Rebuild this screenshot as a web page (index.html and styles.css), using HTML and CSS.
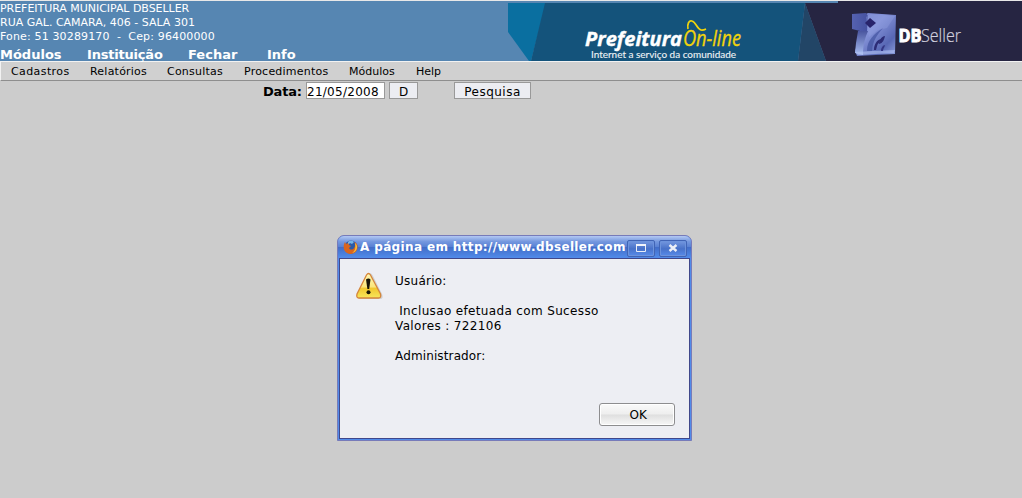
FILE: index.html
```html
<!DOCTYPE html>
<html lang="pt-BR">
<head>
<meta charset="utf-8">
<title>Prefeitura On-line</title>
<link rel="stylesheet" href="styles.css">
</head>
<body>
<header class="header">
  <div class="header-left">
    <div class="address">
      <div class="addr1">PREFEITURA MUNICIPAL DBSELLER</div>
      <div class="addr2">RUA GAL. CAMARA, 406 - SALA 301</div>
      <div class="addr3">Fone: 51 30289170&nbsp; -&nbsp; Cep: 96400000</div>
    </div>
    <nav class="main-nav"><span>Módulos</span><span class="inst">Instituição</span><span>Fechar</span><span>Info</span></nav>
  </div>
  <svg class="banner" width="514" height="60" viewBox="508 1 514 60">
    <defs>
      <linearGradient id="cube" x1="0" y1="0" x2="1" y2="1"><stop offset="0" stop-color="#6f7dca"/><stop offset=".4" stop-color="#8492d8"/><stop offset=".75" stop-color="#5767b4"/><stop offset="1" stop-color="#8fa2df"/></linearGradient>
      <linearGradient id="cubeLeg" x1="0" y1="0" x2="0" y2="1"><stop offset="0" stop-color="#4a569f"/><stop offset="1" stop-color="#a8bdf2"/></linearGradient>
      <linearGradient id="cubeTop" x1="0" y1="0" x2="1" y2="0"><stop offset="0" stop-color="#5562b0"/><stop offset="1" stop-color="#4551a0"/></linearGradient>
    </defs>
    <rect x="508" y="1" width="330" height="2" fill="#5686b2"/>
    <path d="M508 3h38l-15 58h-2L508 32z" fill="#0a6fa0"/>
    <path d="M545 3h260l-7 58H531z" fill="#14537b"/>
    <path d="M805 3l-7 58h28z" fill="#224566"/>
    <path d="M805 3h33V1h184v60H826z" fill="#262542"/>
    <text class="brand" x="585" y="46" textLength="97" lengthAdjust="spacingAndGlyphs">Prefeitura</text>
    <text class="online" x="683" y="46" textLength="58" lengthAdjust="spacingAndGlyphs">On-line</text>
    <path d="M688 29c-1-5 1-9 4-8 4 1 5 8 9 9 2 .5 4-.5 5-1" fill="none" stroke="#f2d40b" stroke-width="1.7"/>
    <text class="slogan" x="591" y="57.5" textLength="145" lengthAdjust="spacingAndGlyphs">Internet a serviço da comunidade</text>
    <g class="cube">
      <path d="M864 15l4-2 28 2-1 39-38 2-2-5 6-18z" fill="url(#cube)"/>
      <path d="M852 14l14-1 2 3-1 15h-7l-8-2z" fill="url(#cubeTop)"/>
      <path d="M858 31h10c-3 7-5 14-5 24l-8-2 1-10z" fill="url(#cubeLeg)"/>
      <path d="M866 17l4-3 25 2-8 12-9 2-9 7z" fill="#94a3e2" opacity=".35"/>
      <path d="M855 52l18-1 22-1-1 3-36 2z" fill="#b3c3f3" opacity=".6"/>
      <path d="M870 18l6 5-6 5-5-5z" fill="#28246b"/>
      <path d="M867 51c0-11 7-17 16-23-6 7-10 12-11 23z" fill="#4253a0" opacity=".7"/>
      <path d="M874 50c0-6 3-10 7-11l-2 4c-2 1-2 4-3 7z" fill="#2c2c76"/>
      <path d="M879 44c0-4 3-8 6-8-1 4-2 7-6 8z" fill="#2c2c76"/>
      <path d="M881 51c0-3 2-6 4-6 0 2-2 3-2 6z" fill="#343785"/>
    </g>
    <text class="db" x="898.5" y="42" textLength="23" lengthAdjust="spacingAndGlyphs">DB</text>
    <text class="seller" x="921" y="42" textLength="40" lengthAdjust="spacingAndGlyphs">Seller</text>
  </svg>
</header>
<nav class="sub-nav"><span class="s1">Cadastros</span><span class="s2">Relatórios</span><span class="s2">Consultas</span><span class="s2">Procedimentos</span><span>Módulos</span><span>Help</span></nav>
<main class="search">
  <label class="date-label" for="data">Data:</label>
  <input class="date-input" id="data" value="21/05/2008">
  <button class="pick">D</button>
  <button class="query">Pesquisa</button>
</main>
<section class="dialog">
  <div class="title-bar">
    <svg class="fox" width="16" height="16" viewBox="0 0 16 16">
      <circle cx="8" cy="8" r="6.5" fill="#2a5aa8"/><path d="M5 3c2-2 5-1 6 0L9 5 7 4 5 6z" fill="#74b4e8"/>
      <path d="M2 3l1 2 2-1 1 2 2 1-2 2c1 2 4 2 5 0 2-2 1-5 0-6 4 1 4 5 3 8-2 4-7 5-10 3C0 12 0 6 2 3z" fill="#d9641e"/>
      <path d="M12 4c4 3 2 9-3 10 3-2 4-5 3-10z" fill="#f5bd3c"/>
    </svg>
    <span class="title">A página em http://www.dbseller.com</span>
    <span class="win-button"><svg width="12" height="10" viewBox="0 0 12 10"><path d="M1.5 1.5h9v7h-9z" fill="none" stroke="#e9edf6"/><path d="M1 1h10v2H1z" fill="#f2f4fa"/></svg></span>
    <span class="win-button close"><svg width="12" height="10" viewBox="0 0 12 10"><path d="M2.5 2L9.5 8M9.5 2L2.5 8" stroke="#edf0f7" stroke-width="2.4"/></svg></span>
  </div>
  <div class="dialog-body">
    <svg class="warning" width="30" height="30" viewBox="0 0 30 30">
      <defs><linearGradient id="warn" x1="0" y1="0" x2="0" y2="1"><stop offset="0" stop-color="#fff8b5"/><stop offset=".55" stop-color="#fae57b"/><stop offset=".6" stop-color="#f1c72d"/><stop offset="1" stop-color="#f7e65c"/></linearGradient></defs>
      <path d="M14 2q2-2 4 2l9 18q2 5-2 5H4q-3-1-1-5z" fill="#bbb" opacity=".6"/>
      <path d="M11.500 3q2-3 4 0l10 19q1 4-2 4H4q-3 0-2-4z" fill="url(#warn)" stroke="#d5853a" stroke-width="1.3"/>
      <path d="M11 7.500q2.500-2 4.500 0l-1.300 9.500h-1.800z" fill="#171407"/><circle cx="13.500" cy="20.300" r="2" fill="#171407"/>
    </svg>
    <div class="message">
      <p class="m1">Usuário:</p>
      <p class="m2">&nbsp;Inclusao efetuada com Sucesso<br>Valores : 722106</p>
      <p class="m3">Administrador:</p>
    </div>
    <button class="ok">OK</button>
  </div>
</section>
</body>
</html>
```
FILE: styles.css
```css
* { box-sizing: border-box; }
body { margin: 0; height: 498px; overflow: hidden; background: #ccc; color: #000; font: 11px "DejaVu Sans", sans-serif; }
button, input { margin: 0; padding: 0; font: 12px "DejaVu Sans", sans-serif; color: #000; border-radius: 0; }
.header { display: flex; height: 61px; border-top: 1px solid #e8e8e8; background: #5686b2; color: #fff; }
.header-left { width: 508px; }
.address { height: 46px; padding-top: 1px; line-height: 14px; white-space: nowrap; }
.addr1 { letter-spacing: -.04px; }
.addr3 { letter-spacing: .15px; }
.main-nav { display: grid; grid-template-columns: 87px 101px 79px 80px; font-weight: bold; font-size: 13px; line-height: 15px; }
.inst { letter-spacing: -.2px; }
.banner { display: block; }
.brand { font: italic bold 20px "Open Sans", sans-serif; fill: #fff; stroke: #fff; stroke-width: .4px; }
.online { font: italic 21px "Open Sans", sans-serif; fill: #f2d40b; stroke: #f2d40b; stroke-width: .3px; }
.slogan { font: 9.5px Lato, sans-serif; fill: #f0f4f6; stroke: #f0f4f6; stroke-width: .1px; }
.cube { filter: blur(.5px); }
.db { font: bold 17px "Open Sans", sans-serif; fill: #fff; stroke: #fff; stroke-width: .9px; }
.seller { font: 300 18px "Open Sans", sans-serif; fill: #d2d1df; stroke: #d2d1df; stroke-width: .2px; }
.sub-nav { display: grid; grid-template-columns: 79px 77px 77px 105px 67px 80px; height: 20px; padding-left: 10px; line-height: 19px; background: #d0d0d0; border: solid; border-width: 1px 0 1px 1px; border-color: #f2f2f2 #f2f2f2 #8e8e8e; }
.s1 { letter-spacing: .4px; }
.s2 { letter-spacing: .22px; }
.search { display: flex; padding: 1px 0 0 263px; align-items: flex-start; }
.date-label { width: 43px; padding-top: 1px; font-weight: bold; font-size: 13px; line-height: 18px; letter-spacing: -.2px; }
.date-input { width: 79px; height: 17px; padding-top: 2px; border: 1px solid #999; background: #fff; letter-spacing: .27px; }
.pick, .query { height: 17px; padding-top: 2px; border: 1px solid #999; background: #ecedf2; line-height: 14px; }
.pick { width: 29px; margin-left: 4px; }
.query { width: 77px; margin-left: 36px; letter-spacing: .5px; }
.dialog { position: absolute; left: 337px; top: 235px; width: 355px; height: 206px; padding: 0 1px 1px; border: 1px solid #777bb9; border-radius: 7px 7px 0 0; background: #518bea; }
.title-bar { display: flex; align-items: center; height: 22px; margin: 0 -1px; padding-left: 5px; border-radius: 6px 6px 0 0; background: linear-gradient(#b3c8f3 0, #7598df 25%, #5a82d4 48%, #426dc8 52%, #518bea 100%); color: #fff; }
.fox { flex: none; }
.title { flex: none; width: 268px; padding-left: 1px; font-weight: bold; font-size: 12px; letter-spacing: .36px; white-space: nowrap; }
.win-button { display: flex; flex: none; align-items: center; justify-content: center; width: 28px; height: 17px; margin-top: 2px; border: 1px solid #4164b5; border-radius: 2px; background: linear-gradient(#7598df, #4871c8 52%, #578bea); box-shadow: inset 0 0 0 1px #6d93dc; }
.close { margin-left: 4px; }
.dialog-body { display: flex; height: 181px; padding: 12px 15px; border: 1px solid #40478a; background: #edeef3; }
.warning { flex: none; margin-top: 1px; }
.message { margin-left: 10px; padding-top: 2px; font-size: 12px; line-height: 15px; white-space: nowrap; }
.message p { margin: 0 0 15px; }
.message .m1 { padding-top: 1px; letter-spacing: .25px; }
.m2 { letter-spacing: .35px; }
.m3 { letter-spacing: .13px; }
.ok { align-self: flex-end; width: 76px; height: 23px; margin-left: auto; margin-right: 0; padding-left: 3px; border: 1px solid #8d8d8f; border-radius: 3px; background: linear-gradient(#fafafa, #eee 48%, #dfdfdf 52%, #f7f7f7); box-shadow: inset 0 0 0 1px #fff; flex: none; }
```
